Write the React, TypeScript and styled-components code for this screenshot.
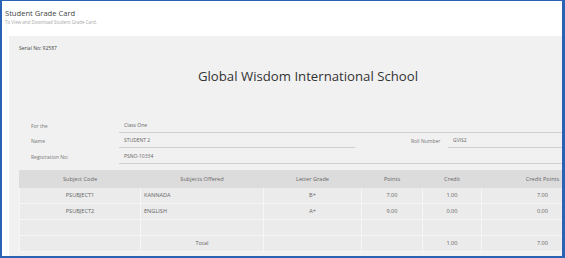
import styled, { createGlobalStyle } from "styled-components";

const GlobalStyle = createGlobalStyle`
  html, body {
    margin: 0;
    padding: 0;
    background: #ffffff;
  }
  body {
    font-family: "Open Sans", "Noto Sans", sans-serif;
  }
`;

const Frame = styled.div`
  box-sizing: border-box;
  width: 565px;
  height: 258px;
  overflow: hidden;
  background: #ffffff;
  border-style: solid;
  border-color: #2a62b6;
  border-width: 1px 3px 2px 2px;
`;

const Header = styled.div`
  padding: 7px 0 0 3px;
  height: 28px;
  box-sizing: border-box;
`;

const Title = styled.div`
  font-size: 7.6px;
  line-height: 10px;
  color: #444;
`;

const Subtitle = styled.div`
  font-size: 4.5px;
  line-height: 8px;
  color: #a8a8a8;
`;

const Panel = styled.div`
  margin: 7px 0 0 7px;
  width: 598px;
  min-height: 240px;
  box-sizing: border-box;
  padding: 8px 10px 0 10px;
  background: #f1f1f1;
`;

const Serial = styled.div`
  font-size: 5px;
  line-height: 8px;
  color: #444;
`;

const SchoolName = styled.h1`
  margin: 15px 0 0;
  text-align: center;
  font-size: 13.2px;
  line-height: 18px;
  font-weight: 400;
  color: #333;
`;

const Form = styled.div`
  margin-top: 32px;
  padding-left: 12px;
`;

const Row = styled.div`
  display: flex;
  align-items: flex-end;
  height: 15.5px;
`;

const Label = styled.div<{ $w?: number; $ml?: number }>`
  width: ${(p) => p.$w ?? 88}px;
  margin-left: ${(p) => p.$ml ?? 0}px;
  flex: none;
  font-size: 5px;
  line-height: 9px;
  padding-bottom: 2px;
  color: #777;
`;

const Field = styled.div<{ $w?: number }>`
  ${(p) => (p.$w ? `width: ${p.$w}px; flex: none;` : "flex: 1;")}
  box-sizing: border-box;
  padding: 0 0 2px 5px;
  font-size: 5px;
  line-height: 9px;
  color: #666;
  border-bottom: 1px solid #cfcfcf;
`;

const Table = styled.table`
  margin-top: 6px;
  width: 100%;
  border-collapse: collapse;
  table-layout: fixed;
  font-size: 5.6px;
  color: #666;
`;

const Th = styled.th<{ $w: number }>`
  width: ${(p) => p.$w}px;
  height: 16px;
  padding: 0;
  font-weight: 400;
  background: #dcdcdc;
  border: 1px solid #dcdcdc;
  color: #666;
`;

const Td = styled.td<{ $left?: boolean }>`
  height: 15px;
  padding: 0 0 0 ${(p) => (p.$left ? 3 : 0)}px;
  text-align: ${(p) => (p.$left ? "left" : "center")};
  background: #ebebeb;
  border: 1px solid #f6f6f6;
  color: #666;
`;

const columns = [
  { name: "Subject Code", w: 120 },
  { name: "Subjects Offered", w: 122 },
  { name: "Letter Grade", w: 97 },
  { name: "Points", w: 60 },
  { name: "Credit", w: 58 },
  { name: "Credit Points", w: 121 },
];

const rows = [
  ["PSUBJECT1", "KANNADA", "B+", "7.00", "1.00", "7.00"],
  ["PSUBJECT2", "ENGLISH", "A+", "9.00", "0.00", "0.00"],
];

export default function App() {
  return (
    <>
      <GlobalStyle />
      <Frame>
        <Header>
          <Title>Student Grade Card</Title>
          <Subtitle>To View and Download Student Grade Card.</Subtitle>
        </Header>
        <Panel>
          <Serial>Serial No: 92587</Serial>
          <SchoolName>Global Wisdom International School</SchoolName>
          <Form>
            <Row>
              <Label>For the</Label>
              <Field>Class One</Field>
            </Row>
            <Row>
              <Label>Name</Label>
              <Field $w={236}>STUDENT 2</Field>
              <Label $w={37} $ml={56}>
                Roll Number
              </Label>
              <Field>GVIS2</Field>
            </Row>
            <Row>
              <Label>Registration No:</Label>
              <Field>PSNO-10334</Field>
            </Row>
          </Form>
          <Table>
            <thead>
              <tr>
                {columns.map((c) => (
                  <Th key={c.name} $w={c.w}>
                    {c.name}
                  </Th>
                ))}
              </tr>
            </thead>
            <tbody>
              {rows.map((r) => (
                <tr key={r[0]}>
                  {r.map((v, i) => (
                    <Td key={i} $left={i === 1}>
                      {v}
                    </Td>
                  ))}
                </tr>
              ))}
              <tr>
                {columns.map((c) => (
                  <Td key={c.name} />
                ))}
              </tr>
              <tr>
                <Td />
                <Td>Total</Td>
                <Td />
                <Td />
                <Td>1.00</Td>
                <Td>7.00</Td>
              </tr>
            </tbody>
          </Table>
        </Panel>
      </Frame>
    </>
  );
}
